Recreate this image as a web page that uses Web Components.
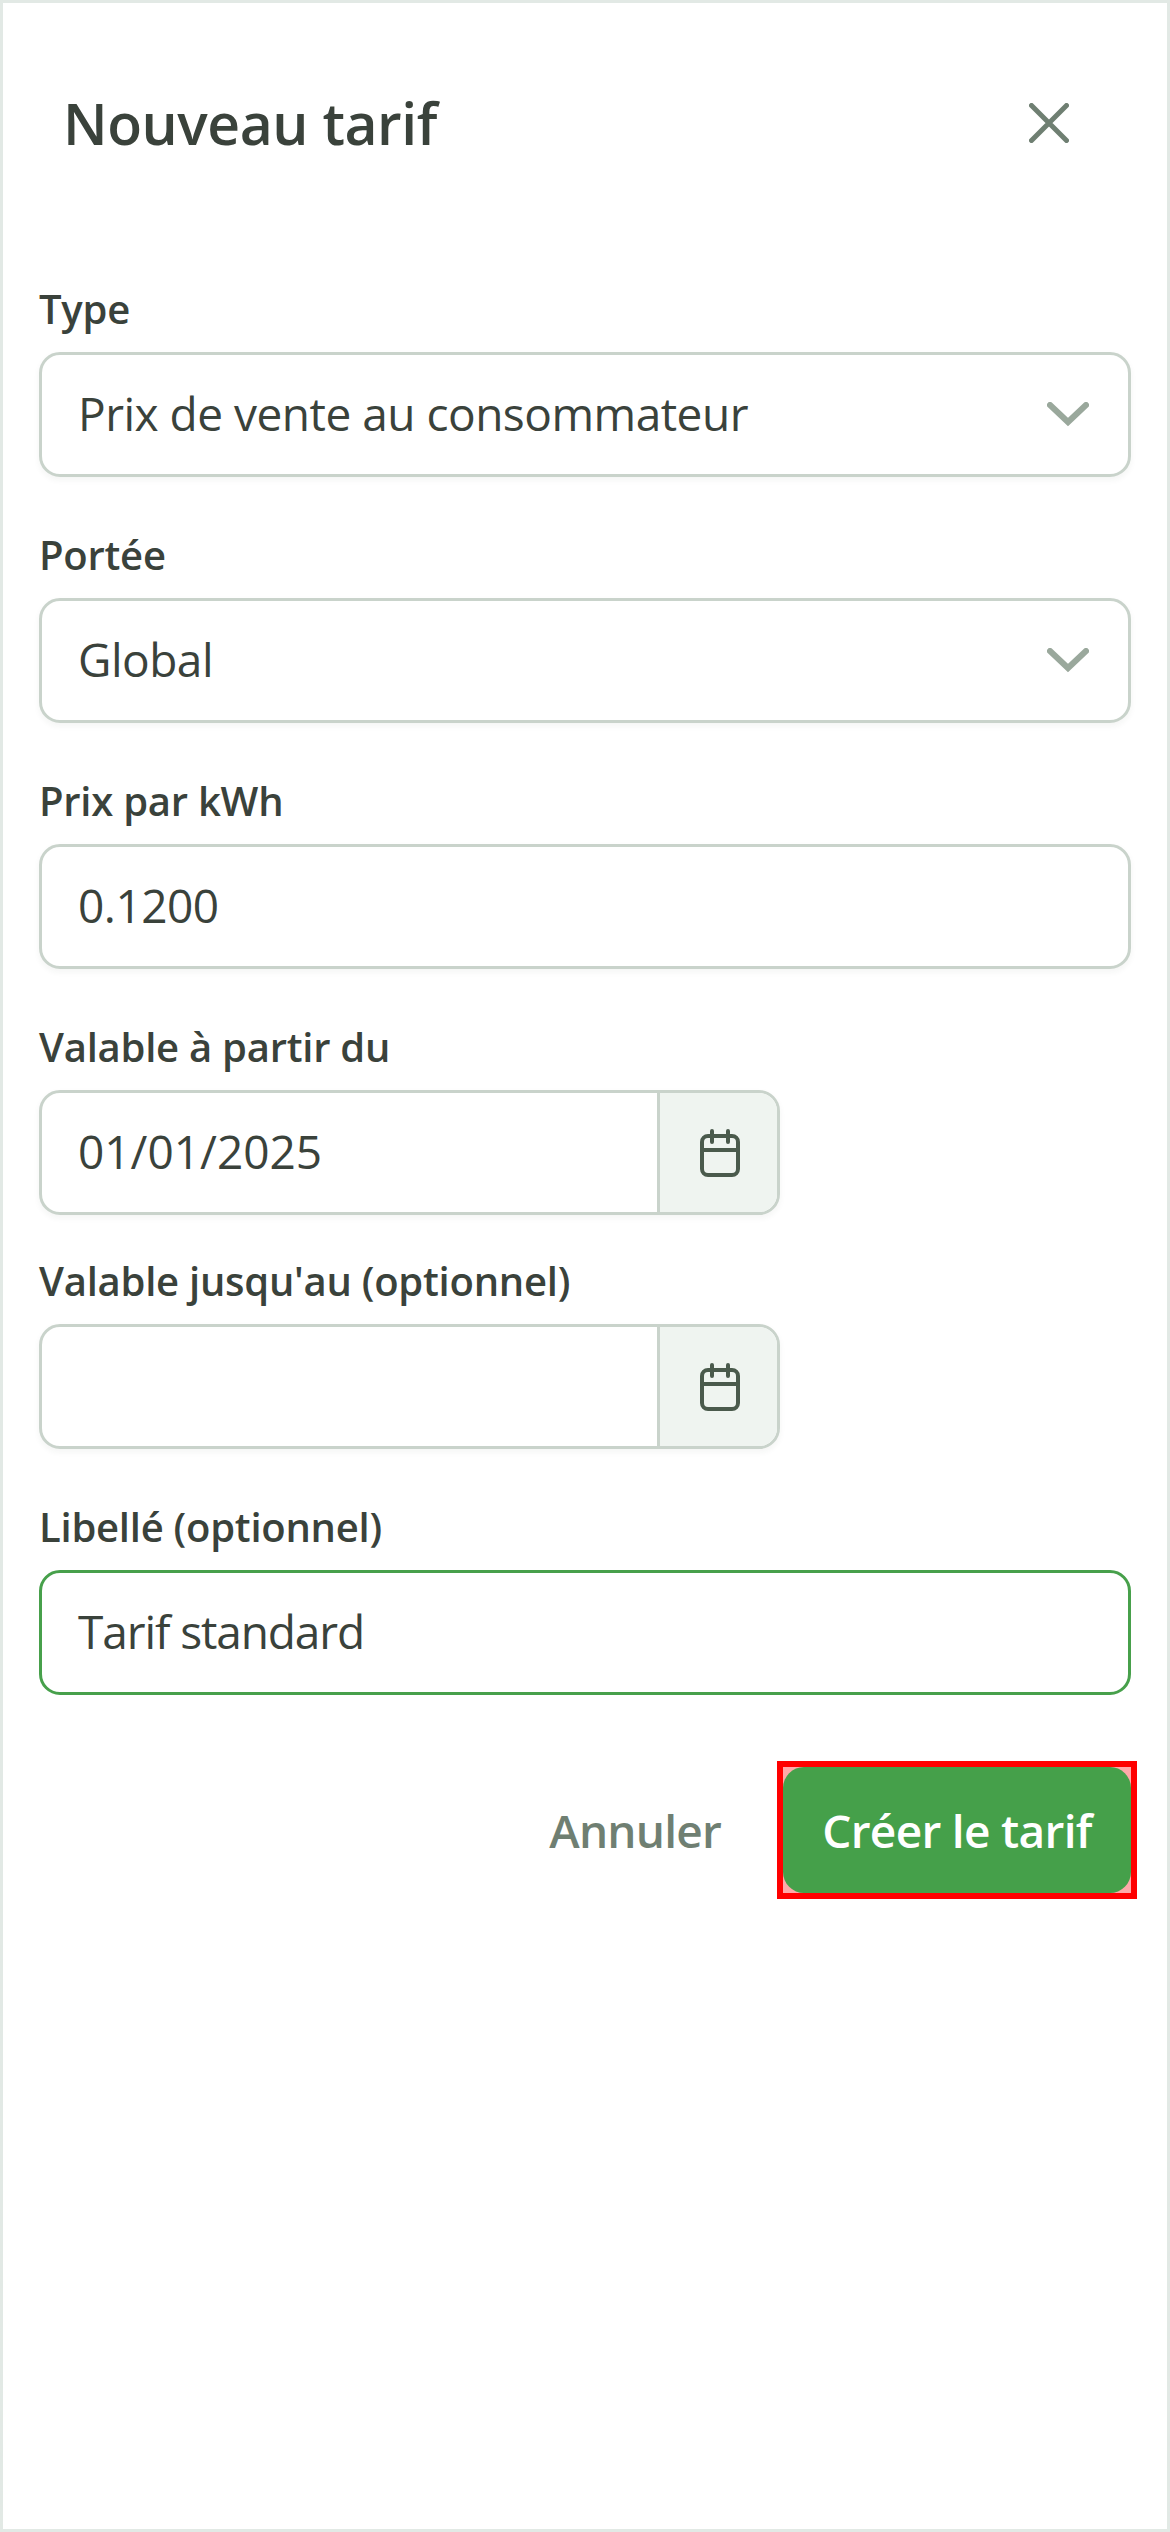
<!DOCTYPE html>
<html lang="fr">
<head>
<meta charset="utf-8">
<title>Nouveau tarif</title>
<style>
    html, body { margin: 0; padding: 0; background: #fff; }
    body { font-family: "Open Sans", "Noto Sans", sans-serif; color: #3a423b; }
</style>
</head>
<body>
<tarif-dialog>
    <form-field label="Type"><select-box>Prix de vente au consommateur</select-box></form-field>
    <form-field label="Portée"><select-box>Global</select-box></form-field>
    <form-field label="Prix par kWh"><text-box>0.1200</text-box></form-field>
    <form-field label="Valable à partir du" dense><date-box style="letter-spacing: 0">01/01/2025</date-box></form-field>
    <form-field label="Valable jusqu'au (optionnel)"><date-box></date-box></form-field>
    <form-field label="Libellé (optionnel)"><text-box focused style="letter-spacing: -1.1px">Tarif standard</text-box></form-field>
    <div slot="actions">Annuler</div>
    <action-button slot="submit">Créer le tarif</action-button>
</tarif-dialog>

<script>
class TarifDialog extends HTMLElement {
    constructor() {
        super();
        this.attachShadow({ mode: "open" });
        this.shadowRoot.innerHTML = `
            <style>
                :host {
                    display: flex;
                    flex-direction: column;
                    box-sizing: border-box;
                    height: 2532px;
                    border: 3px solid #e2e9e5;
                    background: #fff;
                }
                header {
                    display: flex;
                    align-items: center;
                    justify-content: space-between;
                    height: 240px;
                    padding: 0 98px 0 60px;
                }
                h2 {
                    margin: 0;
                    font-size: 57px;
                    font-weight: 600;
                    letter-spacing: -0.45px;
                    line-height: 80px;
                    color: #3a423b;
                }
                svg { display: block; }
                main {
                    display: flex;
                    flex-direction: column;
                    padding: 37px 36px 0;
                }
                footer {
                    display: flex;
                    align-items: center;
                    justify-content: flex-end;
                    gap: 62px;
                    padding: 23px 36px 0;
                    font-size: 46px;
                    font-weight: 600;
                    letter-spacing: -0.8px;
                    color: #6f7f72;
                }
            </style>
            <header>
                <h2>Nouveau tarif</h2>
                <svg width="40" height="40" viewBox="0 0 40 40" fill="none" stroke="#6f7f72" stroke-width="5" stroke-linecap="round">
                    <path d="M2.5 2.5 37.5 37.5M37.5 2.5 2.5 37.5"/>
                </svg>
            </header>
            <main><slot></slot></main>
            <footer>
                <slot name="actions"></slot>
                <slot name="submit"></slot>
            </footer>
        `;
    }
}

class FormField extends HTMLElement {
    constructor() {
        super();
        this.attachShadow({ mode: "open" });
        this.shadowRoot.innerHTML = `
            <style>
                :host { display: block; margin-bottom: 49px; }
                :host([dense]) { margin-bottom: 37px; }
                label {
                    display: block;
                    height: 56px;
                    margin-bottom: 16px;
                    font-size: 40px;
                    font-weight: 600;
                    letter-spacing: -0.25px;
                    line-height: 57px;
                    color: #3a423b;
                }
            </style>
            <label></label>
            <slot></slot>
        `;
    }

    connectedCallback() {
        this.shadowRoot.querySelector("label").textContent = this.getAttribute("label");
    }
}

// Estilos comunes de las cajas de formulario
const boxStyles = `
    :host {
        display: flex;
        align-items: center;
        box-sizing: border-box;
        height: 125px;
        border: 3px solid #c9d3cb;
        border-radius: 21px;
        background: #fff;
        box-shadow: 0 3px 6px rgba(40, 60, 45, 0.05);
        font-size: 46px;
        letter-spacing: -0.5px;
        color: #3a423b;
    }
    .valor { flex: 1; padding: 0 0 3px 36px; line-height: 62px; }
    svg { display: block; }
`;

class TextBox extends HTMLElement {
    constructor() {
        super();
        this.attachShadow({ mode: "open" });
        this.shadowRoot.innerHTML = `
            <style>
                ${boxStyles}
                :host([focused]) { border-color: #47a04b; box-shadow: none; }
            </style>
            <div class="valor"><slot></slot></div>
        `;
    }
}

class SelectBox extends HTMLElement {
    constructor() {
        super();
        this.attachShadow({ mode: "open" });
        this.shadowRoot.innerHTML = `
            <style>
                ${boxStyles}
                svg { margin-right: 39px; }
            </style>
            <div class="valor"><slot></slot></div>
            <svg width="42" height="25" viewBox="0 0 42 25" fill="none" stroke="#9aa89c" stroke-width="6" stroke-linecap="round" stroke-linejoin="miter">
                <path d="M3 3 21 20 39 3"/>
            </svg>
        `;
    }
}

class DateBox extends HTMLElement {
    constructor() {
        super();
        this.attachShadow({ mode: "open" });
        this.shadowRoot.innerHTML = `
            <style>
                ${boxStyles}
                :host { width: 741px; overflow: hidden; }
                .addon {
                    display: flex;
                    align-items: center;
                    justify-content: center;
                    align-self: stretch;
                    box-sizing: border-box;
                    width: 120px;
                    padding-left: 3px;
                    border-left: 3px solid #c9d3cb;
                    background: #eff4f0;
                }
            </style>
            <div class="valor"><slot></slot></div>
            <div class="addon">
                <svg width="40" height="48" viewBox="0 0 40 48" fill="none" stroke="#4a5a4c" stroke-width="4" stroke-linecap="round">
                    <rect x="2" y="7" width="36" height="39" rx="6"/>
                    <path d="M12 2V13M28 2V13M2 21H38"/>
                </svg>
            </div>
        `;
    }
}

class ActionButton extends HTMLElement {
    constructor() {
        super();
        this.attachShadow({ mode: "open" });
        this.shadowRoot.innerHTML = `
            <style>
                :host {
                    display: block;
                    background: #ffa9a9;
                    outline: 6px solid #ff0000;
                }
                button {
                    display: block;
                    box-sizing: border-box;
                    width: 348px;
                    height: 126px;
                    padding: 0;
                    border: none;
                    border-radius: 21px;
                    background: #45a04a;
                    color: #fff;
                    font: 600 46px "Open Sans", "Noto Sans", sans-serif;
                    letter-spacing: -0.7px;
                }
            </style>
            <button><slot></slot></button>
        `;
    }
}

// Registrar los componentes
customElements.define("tarif-dialog", TarifDialog);
customElements.define("form-field", FormField);
customElements.define("text-box", TextBox);
customElements.define("select-box", SelectBox);
customElements.define("date-box", DateBox);
customElements.define("action-button", ActionButton);
</script>
</body>
</html>
